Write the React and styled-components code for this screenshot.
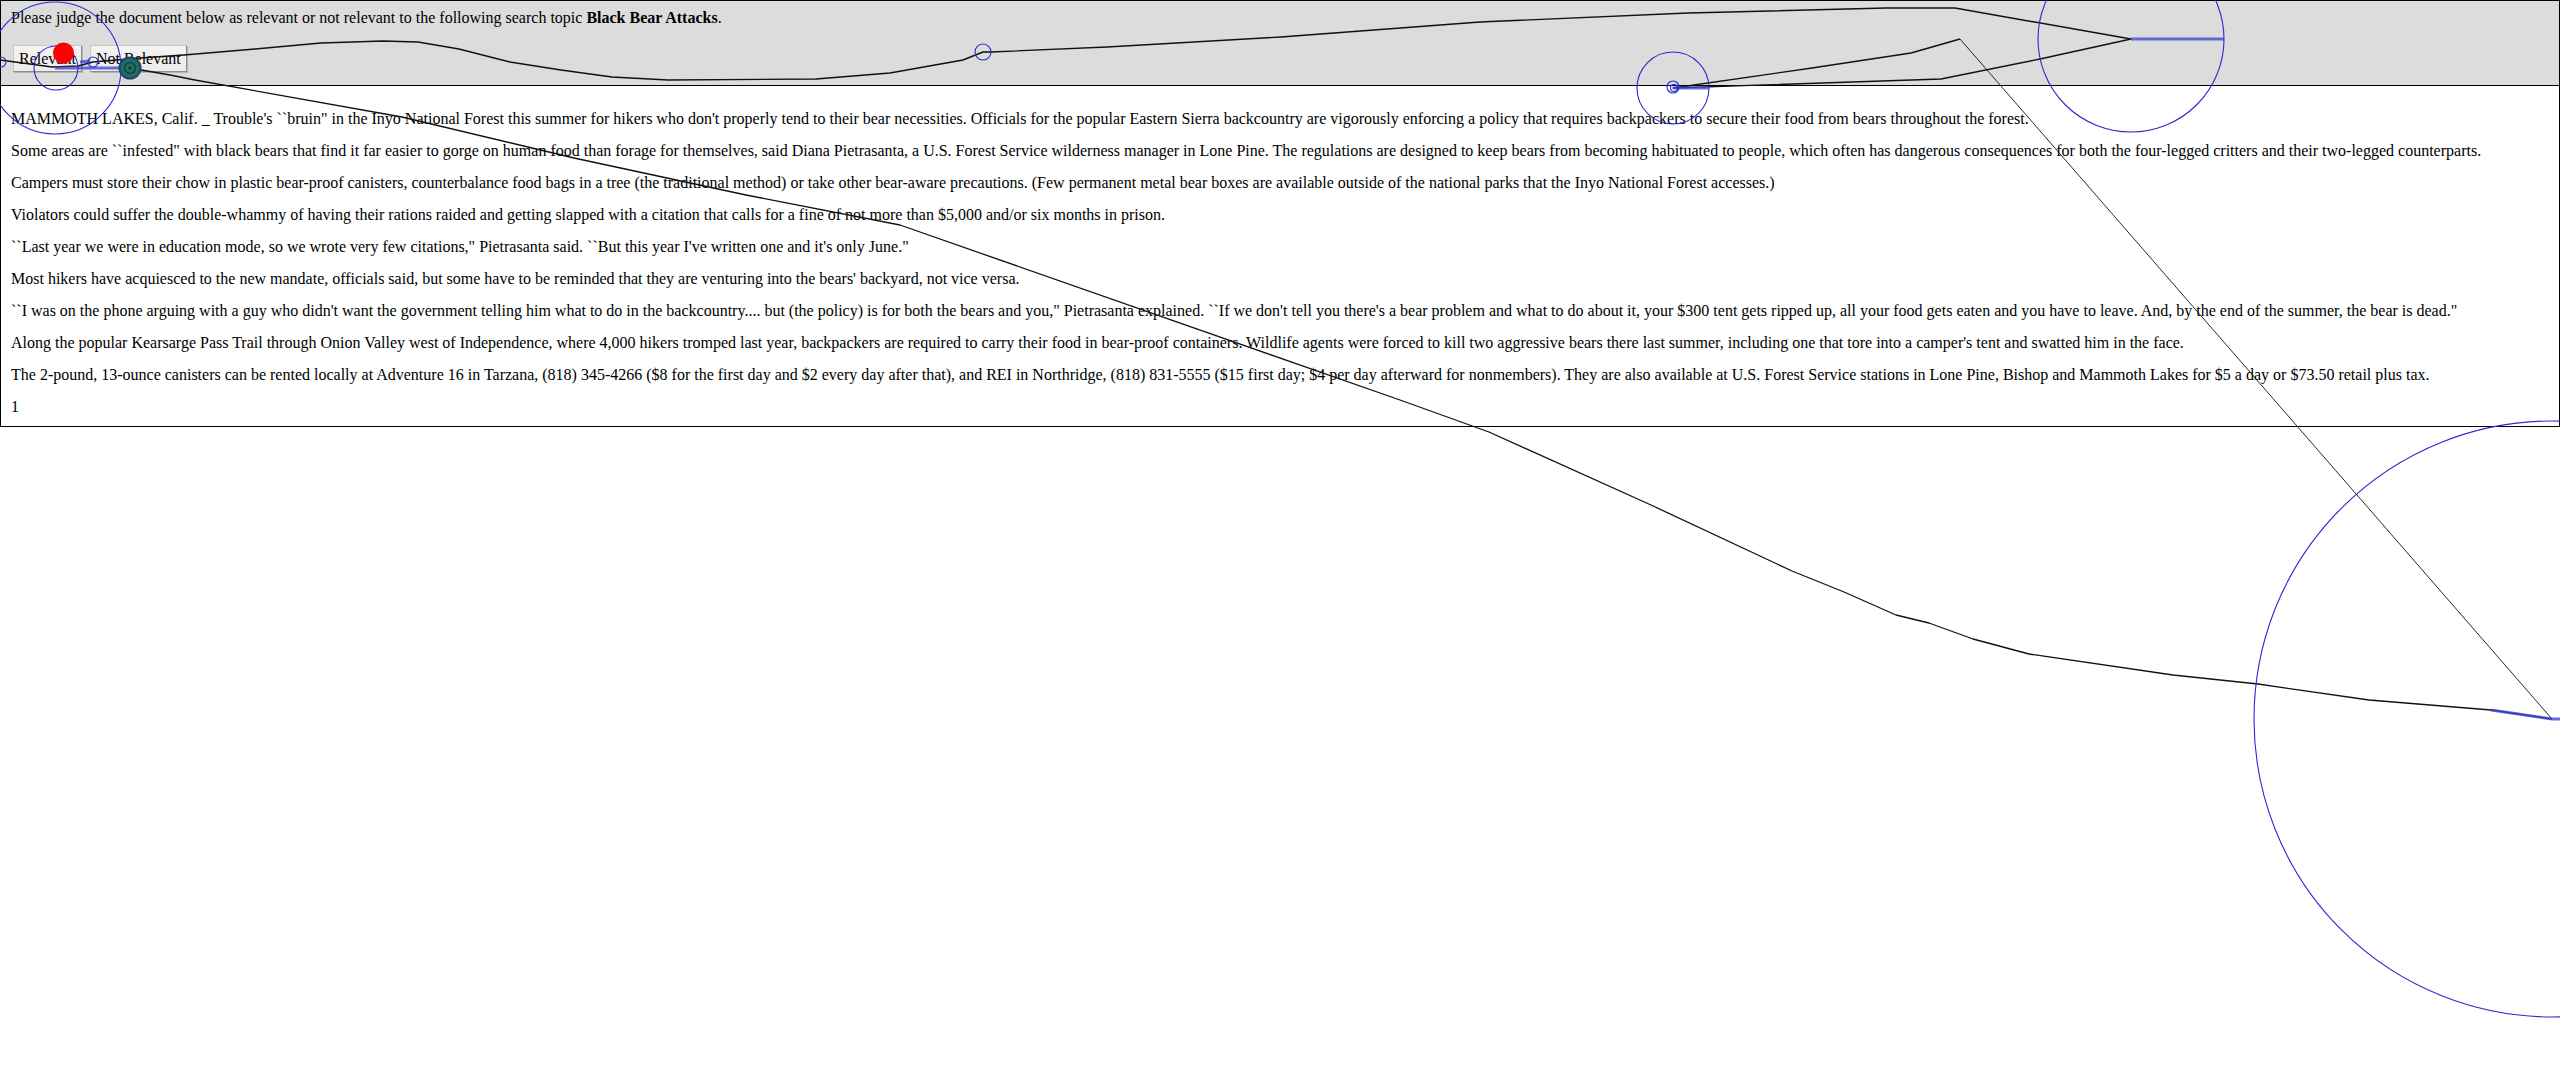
import React from "react";
import styled, { createGlobalStyle } from "styled-components";

const GlobalStyle = createGlobalStyle`
  html, body {
    margin: 0;
    padding: 0;
    background: #ffffff;
  }
  body {
    font-family: "Liberation Serif", "Times New Roman", serif;
    font-size: 16px;
    color: #000;
  }
`;

const Page = styled.div`
  position: relative;
  width: 2560px;
  min-height: 1067px;
  overflow: hidden;
`;

const Header = styled.div`
  background: #dcdcdc;
  border: 1px solid #000;
  padding: 8px 10px 13px;
`;

const Prompt = styled.p`
  margin: 0 0 18px;
  line-height: 18px;
  white-space: nowrap;
`;

const ButtonRow = styled.div`
  display: flex;
  gap: 8px;
  padding-left: 2px;
`;

const JudgeButton = styled.button`
  height: 27px;
  padding: 0 5px;
  font-family: "Liberation Serif", "Times New Roman", serif;
  font-size: 16px;
  line-height: 25px;
  color: #000;
  background: linear-gradient(#f5f4f2, #ecebe9);
  border: 1px solid;
  border-color: #c9c9c9 #8c8c8c #8c8c8c #c9c9c9;
  box-shadow: 1px 1px 0 #b5b5b5;
  border-radius: 0;
  cursor: pointer;
`;

const DocumentBox = styled.div`
  border: 1px solid #000;
  border-top: none;
  padding: 24px 10px 10px;
  display: flex;
  flex-direction: column;
  gap: 14px;
`;

const Para = styled.p`
  margin: 0;
  line-height: 18px;
  white-space: nowrap;
`;

const Overlay = styled.svg`
  position: absolute;
  top: 0;
  left: 0;
  width: 2560px;
  height: 1067px;
  pointer-events: none;
`;

const paragraphs = [
  "MAMMOTH LAKES, Calif. _ Trouble's ``bruin\" in the Inyo National Forest this summer for hikers who don't properly tend to their bear necessities. Officials for the popular Eastern Sierra backcountry are vigorously enforcing a policy that requires backpackers to secure their food from bears throughout the forest.",
  "Some areas are ``infested\" with black bears that find it far easier to gorge on human food than forage for themselves, said Diana Pietrasanta, a U.S. Forest Service wilderness manager in Lone Pine. The regulations are designed to keep bears from becoming habituated to people, which often has dangerous consequences for both the four-legged critters and their two-legged counterparts.",
  "Campers must store their chow in plastic bear-proof canisters, counterbalance food bags in a tree (the traditional method) or take other bear-aware precautions. (Few permanent metal bear boxes are available outside of the national parks that the Inyo National Forest accesses.)",
  "Violators could suffer the double-whammy of having their rations raided and getting slapped with a citation that calls for a fine of not more than $5,000 and/or six months in prison.",
  "``Last year we were in education mode, so we wrote very few citations,\" Pietrasanta said. ``But this year I've written one and it's only June.\"",
  "Most hikers have acquiesced to the new mandate, officials said, but some have to be reminded that they are venturing into the bears' backyard, not vice versa.",
  "``I was on the phone arguing with a guy who didn't want the government telling him what to do in the backcountry.... but (the policy) is for both the bears and you,\" Pietrasanta explained. ``If we don't tell you there's a bear problem and what to do about it, your $300 tent gets ripped up, all your food gets eaten and you have to leave. And, by the end of the summer, the bear is dead.\"",
  "Along the popular Kearsarge Pass Trail through Onion Valley west of Independence, where 4,000 hikers tromped last year, backpackers are required to carry their food in bear-proof containers. Wildlife agents were forced to kill two aggressive bears there last summer, including one that tore into a camper's tent and swatted him in the face.",
  "The 2-pound, 13-ounce canisters can be rented locally at Adventure 16 in Tarzana, (818) 345-4266 ($8 for the first day and $2 every day after that), and REI in Northridge, (818) 831-5555 ($15 first day; $4 per day afterward for nonmembers). They are also available at U.S. Forest Service stations in Lone Pine, Bishop and Mammoth Lakes for $5 a day or $73.50 retail plus tax.",
  "1",
];

const pathA = [
  [0, 60], [30, 64], [52, 67], [78, 66], [93, 62], [140, 58], [184, 55],
  [255, 49], [321, 43], [383, 41], [418, 42], [459, 49], [510, 62],
  [561, 70], [612, 77], [668, 80], [816, 79], [890, 73], [963, 60],
  [983, 52], [991, 52], [1107, 47], [1281, 37], [1480, 22], [1688, 13],
  [1886, 8], [1955, 8], [2131, 39], [2040, 59], [1941, 79], [1673, 88],
  [1812, 68], [1911, 53], [1960, 39],
];

const pathB = [
  [130, 68], [170, 75], [195, 80], [402, 117], [574, 158], [746, 195],
  [900, 225], [1400, 400], [1489, 432], [1651, 505], [1792, 571],
  [1844, 592], [1896, 615], [1929, 623], [1973, 639], [2029, 654],
  [2173, 675], [2258, 684], [2369, 700], [2491, 710], [2552, 719],
];

const fixations = [
  { cx: 55, cy: 68, r: 66 },
  { cx: 56, cy: 68, r: 22 },
  { cx: 1, cy: 62, r: 5 },
  { cx: 93, cy: 62, r: 5 },
  { cx: 983, cy: 52, r: 8 },
  { cx: 1673, cy: 88, r: 36 },
  { cx: 1673, cy: 87, r: 6 },
  { cx: 1674, cy: 88, r: 3.5 },
  { cx: 2131, cy: 39, r: 93 },
  { cx: 2552, cy: 719, r: 298 },
];

const saccades = [
  [55, 68, 130, 68],
  [80, 62, 90, 61],
  [2131, 39, 2224, 39],
  [1673, 88, 1709, 88],
  [2491, 710, 2552, 719],
  [2552, 719, 2850, 719],
];

const toPoints = (pts) => pts.map(([x, y]) => `${x},${y}`).join(" ");

function GazePlot() {
  return (
    <Overlay viewBox="0 0 2560 1067" xmlns="http://www.w3.org/2000/svg">
      <polyline points={toPoints(pathA)} fill="none" stroke="#111" strokeWidth="1.4" strokeLinejoin="round" />
      <polyline points={toPoints(pathB)} fill="none" stroke="#111" strokeWidth="1.3" strokeLinejoin="round" />
      <line x1="1960" y1="39" x2="2552" y2="719" stroke="#111" strokeWidth="0.9" />
      {saccades.map(([x1, y1, x2, y2], i) => (
        <line key={i} x1={x1} y1={y1} x2={x2} y2={y2} stroke="rgba(70,70,215,0.8)" strokeWidth="3" />
      ))}
      {fixations.map((f, i) => (
        <circle key={i} cx={f.cx} cy={f.cy} r={f.r} fill="none" stroke="#2a2ad2" strokeWidth="1.1" />
      ))}
      <circle cx="63.5" cy="53" r="10.5" fill="#ff0000" />
      <circle cx="130" cy="68" r="10.5" fill="#1d7a36" stroke="#1f3d92" strokeWidth="2" />
      <circle cx="130" cy="68" r="5.5" fill="none" stroke="#1f2c9a" strokeWidth="1.5" />
      <circle cx="130" cy="68" r="1.8" fill="#1f2c9a" />
    </Overlay>
  );
}

export default function App() {
  return (
    <>
      <GlobalStyle />
      <Page>
        <Header>
          <Prompt>
            Please judge the document below as relevant or not relevant to the following search topic <b>Black Bear Attacks</b>.
          </Prompt>
          <ButtonRow>
            <JudgeButton type="button">Relevant</JudgeButton>
            <JudgeButton type="button">Not Relevant</JudgeButton>
          </ButtonRow>
        </Header>
        <DocumentBox>
          {paragraphs.map((t, i) => (
            <Para key={i}>{t}</Para>
          ))}
        </DocumentBox>
        <GazePlot />
      </Page>
    </>
  );
}
